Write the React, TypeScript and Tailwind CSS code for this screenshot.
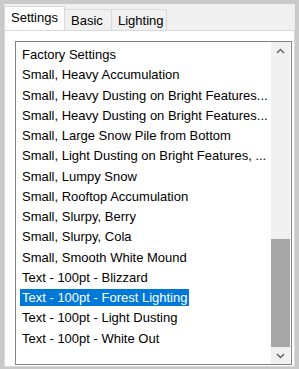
import React from 'react';

const rows = [
  'Factory Settings',
  'Small, Heavy Accumulation',
  'Small, Heavy Dusting on Bright Features...',
  'Small, Heavy Dusting on Bright Features...',
  'Small, Large Snow Pile from Bottom',
  'Small, Light Dusting on Bright Features, ...',
  'Small, Lumpy Snow',
  'Small, Rooftop Accumulation',
  'Small, Slurpy, Berry',
  'Small, Slurpy, Cola',
  'Small, Smooth White Mound',
  'Text - 100pt - Blizzard',
  'Text - 100pt - Forest Lighting',
  'Text - 100pt - Light Dusting',
  'Text - 100pt - White Out',
];

const selected = 12;

export const App = () => {
  return (
    <div
      className="w-[299px] h-[369px] bg-[#c9c9c9] pt-[4px] pl-[4px] pr-[4px] pb-[2px] flex text-[13px] text-black"
      style={{ fontFamily: '"Liberation Sans", Arial, sans-serif' }}
    >
      <div className="flex-1 flex flex-col bg-[#f0f0f0]">
        {/* tabs */}
        <div className="h-[26px] flex items-end">
          <div className="w-[61px] h-[24px] bg-white border border-b-0 border-[#d9d9d9] pl-[6px] pt-[2px] leading-[17px]">
            Settings
          </div>
          <div className="w-[47px] h-[21px] border-t border-r border-[#d9d9d9] pl-[6px] pt-[2px] leading-[17px]">
            Basic
          </div>
          <div className="w-[55px] h-[21px] border-t border-r border-[#d9d9d9] pl-[6px] pt-[2px] leading-[17px]">
            Lighting
          </div>
        </div>
        {/* tab page */}
        <div className="flex-1 min-h-0 bg-white border border-[#d9d9d9] pl-[10px] pt-[10px] pr-[2px] pb-[1px] flex">
          <div className="flex-1 border border-[#828282] flex min-w-0">
            <div className="flex-1 min-w-0 overflow-hidden pt-[2.4px] pl-[4px]">
              {rows.map((r, i) => (
                <div key={i} className="h-[20.25px] flex items-center whitespace-nowrap">
                  <span
                    className={
                      'leading-[17px] px-[2px] ' +
                      (i === selected ? 'bg-[#0078d7] text-white' : '')
                    }
                  >
                    {r}
                  </span>
                </div>
              ))}
            </div>
            <div className="w-[19px] mr-[1px] bg-[#f0f0f0] flex flex-col">
              <div className="h-[17px] flex items-center justify-center">
                <svg width="9" height="6" viewBox="0 0 9 6">
                  <path d="M1 5 L4.5 1.5 L8 5" fill="none" stroke="#606060" strokeWidth="1.4" />
                </svg>
              </div>
              <div className="flex-1" />
              <div className="h-[108px] bg-[#a6a6a6]" />
              <div className="h-[17px] flex items-center justify-center">
                <svg width="9" height="6" viewBox="0 0 9 6">
                  <path d="M1 1 L4.5 4.5 L8 1" fill="none" stroke="#606060" strokeWidth="1.4" />
                </svg>
              </div>
            </div>
          </div>
        </div>
      </div>
    </div>
  );
};

export default App;
